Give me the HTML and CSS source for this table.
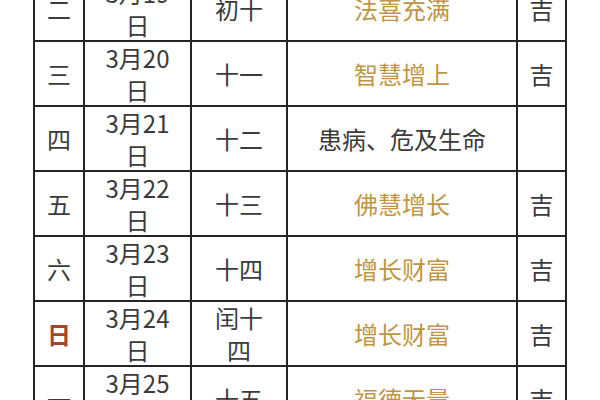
FILE: index.html
```html
<!DOCTYPE html>
<html lang="zh">
<head>
<meta charset="utf-8">
<link rel="stylesheet" href="styles.css">
</head>
<body>
<div class="table">
  <div class="c">二</div><div class="c date">3月19日</div><div class="c lunar">初十</div><div class="c good">法喜充满</div><div class="c">吉</div>
  <div class="c">三</div><div class="c date">3月20日</div><div class="c lunar">十一</div><div class="c good">智慧增上</div><div class="c">吉</div>
  <div class="c">四</div><div class="c date">3月21日</div><div class="c lunar">十二</div><div class="c">患病、危及生命</div><div class="c"></div>
  <div class="c">五</div><div class="c date">3月22日</div><div class="c lunar">十三</div><div class="c good">佛慧增长</div><div class="c">吉</div>
  <div class="c">六</div><div class="c date">3月23日</div><div class="c lunar">十四</div><div class="c good">增长财富</div><div class="c">吉</div>
  <div class="c sun">日</div><div class="c date">3月24日</div><div class="c lunar">闰十四</div><div class="c good">增长财富</div><div class="c">吉</div>
  <div class="c">一</div><div class="c date">3月25日</div><div class="c lunar">十五</div><div class="c good">福德无量</div><div class="c">吉</div>
</div>
</body>
</html>
```
FILE: styles.css
```css
html, body {
  margin: 0;
  padding: 0;
  background: #ffffff;
}
body {
  font-family: "Noto Sans CJK SC", "Noto Sans", sans-serif;
  color: #3b3b3b;
  overflow: hidden;
}
.table {
  display: grid;
  grid-template-columns: 50px 107px 96px 230px 49px;
  grid-auto-rows: 65px;
  width: max-content;
  margin: -25px 0 0 33px;
  border-left: 2px solid #252525;
  border-top: 2px solid #252525;
}
.c {
  box-sizing: border-box;
  border-right: 2px solid #252525;
  border-bottom: 2px solid #252525;
  display: flex;
  align-items: center;
  justify-content: center;
  text-align: center;
  font-size: 24px;
  line-height: 31.5px;
}
.date, .lunar {
  padding: 0 16px;
}
.good {
  color: #bf9444;
}
.sun {
  color: #a4462b;
  font-weight: bold;
}
```
